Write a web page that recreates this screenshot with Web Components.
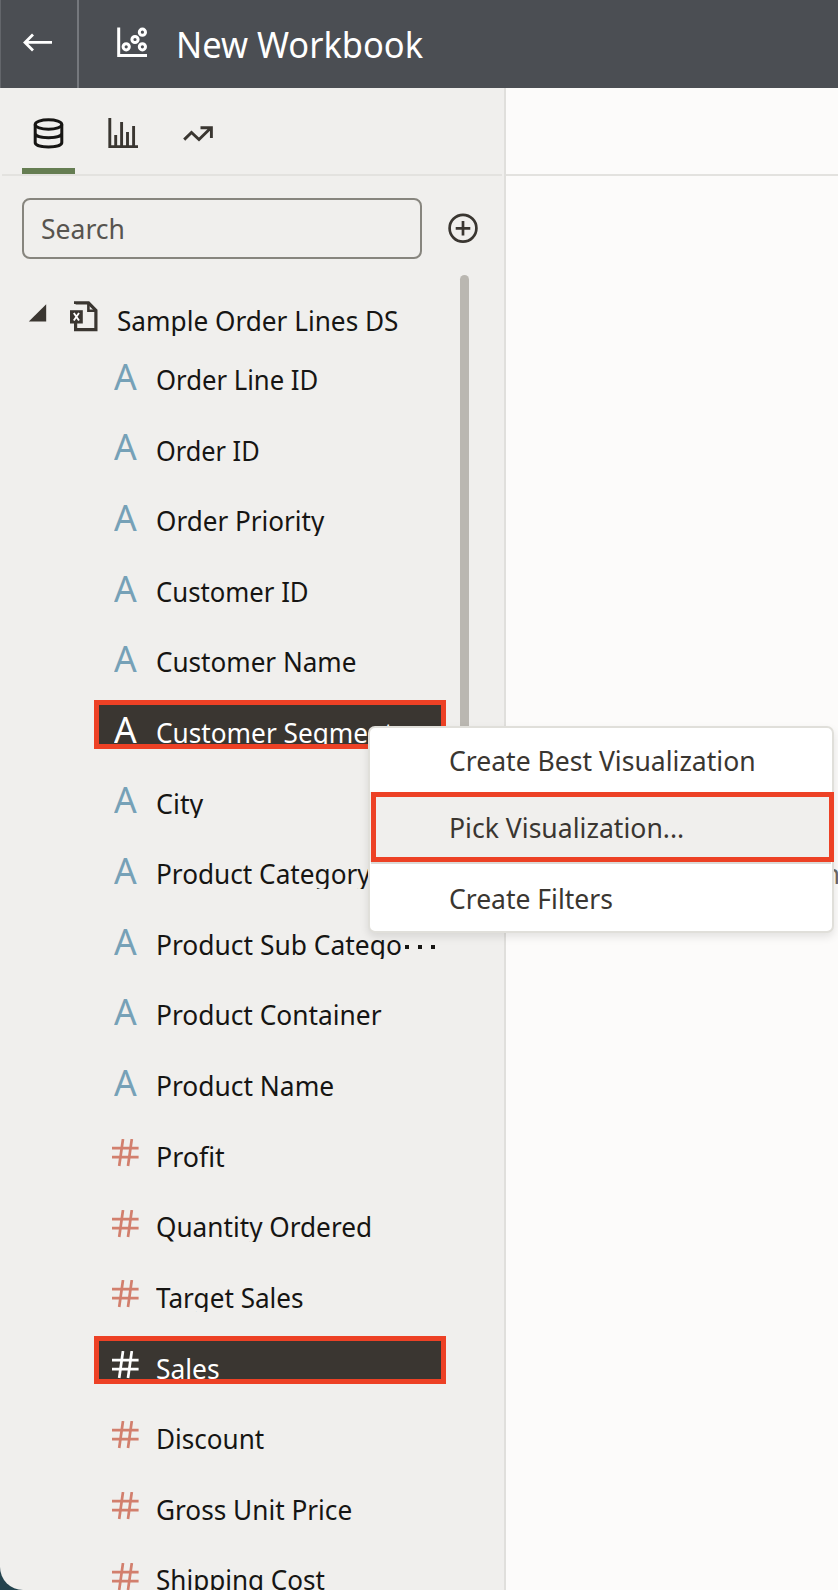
<!DOCTYPE html>
<html lang="en">
<head>
<meta charset="utf-8">
<title>New Workbook</title>
<style>
  html, body { margin: 0; height: 1590px; overflow: hidden; background: #24434e; }
  body { font-family: "Noto Sans", "Open Sans", sans-serif; color: #161513; }
</style>
</head>
<body>
<workbook-app></workbook-app>
<script>
const define = (name, html, setup) => customElements.define(name, class extends HTMLElement {
  connectedCallback() {
    if (this.shadowRoot) return;
    const root = this.attachShadow({ mode: 'open' });
    const t = document.createElement('template');
    t.innerHTML = html;
    root.append(t.content.cloneNode(true));
    if (setup) setup(this, root);
  }
});

/* One line of text, condensed so that its ink spans `ink` pixels. */
const pen = document.createElement('canvas').getContext('2d');
define('fit-text', `
  <style>
    :host { display: block; white-space: nowrap; }
    span { display: inline-block; transform-origin: 0 0; }
  </style>
  <span><slot></slot></span>`, (el, root) => {
  const cs = getComputedStyle(el);
  pen.font = `${cs.fontSize} ${cs.fontFamily}`;
  const m = pen.measureText(el.textContent);
  const ink = m.actualBoundingBoxRight + m.actualBoundingBoxLeft;
  const want = parseFloat(el.getAttribute('ink'));
  if (want) root.querySelector('span').style.transform = `scaleX(${want / ink})`;
});

define('app-header', `
  <style>
    :host { display: flex; height: 88px; background: #4b4e53; color: #fff; box-sizing: border-box; border-left: 1px solid #63666b; }
    .back { width: 76px; border-right: 2px solid #75787d; }
    svg { display: block; }
    .back svg { margin: 30px 0 0 19px; }
    .chart { margin: 24px 0 0 36px; }
    fit-text { font-size: 36px; line-height: 50px; margin: 20px 0 0 25px; }
  </style>
  <div class="back"><svg width="36" height="24" fill="none" stroke="#fff" stroke-width="2.8"><path d="M32 12.4H5M13 4.4L5 12.4L13 20.4"/></svg></div>
  <svg class="chart" width="36" height="36" fill="none" stroke="#fff"><path stroke-width="3" d="M3.7 3.5V31.5H32"/><g stroke-width="3"><circle cx="11.2" cy="22.8" r="3.1"/><circle cx="20" cy="15.5" r="3.1"/><circle cx="27.4" cy="8.2" r="3.1"/><circle cx="27.4" cy="22.8" r="3.1"/></g></svg>
  <fit-text ink="244">New Workbook</fit-text>`);

define('panel-tabs', `
  <style>
    :host { display: flex; height: 86px; margin: 0 2px; border-bottom: 2px solid #e3e2df; }
    .tab { width: 53px; height: 86px; box-sizing: border-box; margin-right: 22px; }
    .tab:first-of-type { margin-left: 20px; border-bottom: 6px solid #657d52; }
    svg { display: block; margin: 28px 0 0 9px; }
  </style>
  <div class="tab"><svg width="36" height="36" fill="none" stroke="#161513" stroke-width="3"><ellipse cx="17.5" cy="8.5" rx="13.3" ry="4.8"/><path d="M4.2 8.5V26.5C4.2 32.4 30.8 32.4 30.8 26.5V8.5M4.2 17.3C4.2 23.2 30.8 23.2 30.8 17.3"/></svg></div>
  <div class="tab"><svg width="36" height="36" fill="none" stroke="#3a3631" stroke-width="2.9"><path d="M3.8 2V30.6H32M9.7 30V19M15.6 30V6M21.5 30V16M27.6 30V10"/></svg></div>
  <div class="tab"><svg width="36" height="36" fill="none" stroke="#3a3631" stroke-width="2.9"><path d="M3.2 23.6L10.5 16.4L18 23.5L30 11.8M19.5 11.7H30.4V22.1"/></svg></div>`);

define('search-row', `
  <style>
    :host { display: flex; padding: 22px 0 0 22px; }
    .box { box-sizing: border-box; width: 400px; height: 61px; border: 2px solid #87857e; border-radius: 8px; padding: 9.4px 0 0 17px; }
    fit-text { font-size: 27px; line-height: 40px; color: #57544f; }
    svg { display: block; margin: 13px 0 0 24px; }
  </style>
  <div class="box"><fit-text ink="81.3">Search</fit-text></div>
  <svg width="34" height="34" fill="none" stroke="#3a3631" stroke-width="2.7"><circle cx="17" cy="17.3" r="13.4"/><path d="M17 10V24.6M9.7 17.3H24.3"/></svg>`);

define('tree-root', `
  <style>
    :host { display: flex; height: 91px; }
    svg { display: block; flex: none; }
    .fold { margin: 44px 0 0 28px; }
    .file { margin: 41px 0 0 21px; }
    .clip { height: 32.5px; overflow: hidden; margin: 44px 0 0 15.8px; }
    fit-text { font-size: 27px; line-height: 36px; }
  </style>
  <svg class="fold" width="20" height="20"><path fill="#3a3631" d="M18.2 1.3V18.6H.8z"/></svg>
  <svg class="file" width="32" height="34" fill="none" stroke="#3a3631"><path stroke-width="3.2" d="M6.6 4V2.9H19.5L26.9 10.5V29.6H6.6V22"/><path stroke-width="2.6" d="M19.4 3V10.7H27"/><path fill="#3a3631" stroke="none" d="M1 10.2H13.8V23.5H1z"/><path stroke="#fff" stroke-width="1.9" d="M4.8 13L10 20.5M10 13L4.8 20.5"/></svg>
  <div class="clip"><fit-text ink="279.7">Sample Order Lines DS</fit-text></div>`);

define('field-row', `
  <style>
    :host { display: flex; position: relative; height: 70.62px; flex: none; box-sizing: border-box; padding-left: 112px; }
    .icon { width: 28px; height: 44px; flex: none; color: #76a1b7; font-size: 36px; line-height: 50px; position: relative; }
    .icon fit-text { margin: 1.7px 0 0 2px; }
    .icon svg { display: block; margin-top: 12.2px; stroke: #d27f6d; }
    .clip { height: 32.5px; width: 297px; overflow: hidden; margin: 12px 0 0 16.4px; position: relative; display: flex; }
    .clip fit-text { font-size: 27px; line-height: 36px; }
    :host([selected]) { color: #fff; }
    :host([selected]) .icon { color: #fff; }
    :host([selected]) .icon svg { stroke: #fff; }
    .fill, .mark { display: none; position: absolute; left: 94px; top: -3px; width: 352.4px; height: 48.6px; box-sizing: border-box; }
    :host([selected]) .fill { display: block; background: #3a3631; }
    :host([selected]) .mark { display: block; border: 5.3px solid #ed4125; }
    .dots { display: none; gap: 9px; position: absolute; left: 249px; top: 18px; }
    .dots i { width: 4px; height: 4px; background: #161513; }
    :host([more]) .dots { display: flex; }
  </style>
  <div class="fill"></div>
  <div class="icon"></div>
  <div class="clip"><slot></slot><div class="dots"><i></i><i></i><i></i></div></div>
  <div class="mark"></div>`, (el, root) => {
  root.querySelector('.icon').innerHTML = el.getAttribute('kind') === 'measure'
    ? '<svg width="28" height="28" fill="none" stroke-width="2.7"><path d="M0 9.2H26.6M0 18.2H26.6M11 0L7.2 27M19.8 0L16 27"/></svg>'
    : '<fit-text ink="22.7">A</fit-text>';
  const label = document.createElement('fit-text');
  label.setAttribute('ink', el.getAttribute('ink'));
  label.textContent = el.getAttribute('label');
  root.querySelector('slot').replaceWith(label);
});

const fields = [
  ['Order Line ID', 160.7], ['Order ID', 102], ['Order Priority', 167.5], ['Customer ID', 151],
  ['Customer Name', 198.3], ['Customer Segment', 237, 'selected'], ['City', 46.5],
  ['Product Category', 213], ['Product Sub Catego', 242.7, 'more'], ['Product Container', 223.5],
  ['Product Name', 175], ['Profit', 67, 'm'], ['Quantity Ordered', 213.5, 'm'],
  ['Target Sales', 146.7, 'm'], ['Sales', 61.7, 'm selected'], ['Discount', 106.5, 'm'],
  ['Gross Unit Price', 194, 'm'], ['Shipping Cost', 168.3, 'm']
];
define('field-tree', `
  <style>
    :host { display: grid; grid-template-columns: 460px 9px; margin-top: 0; }
    .list { display: flex; flex-direction: column; }
    .bar { margin-top: 16px; height: 560px; background: #bab7b1; border-radius: 5px; }
  </style>
  <div class="list"><tree-root></tree-root>${fields.map(([n, w, f = '']) =>
    `<field-row label="${n}" ink="${w}" kind="${f.startsWith('m') && f !== 'more' ? 'measure' : 'attribute'}" ${f.includes('selected') ? 'selected' : ''} ${f === 'more' ? 'more' : ''}></field-row>`).join('')}</div>
  <div class="bar"></div>`);

define('data-panel', `
  <style>
    :host { display: block; box-sizing: border-box; width: 506px; height: 1502px; overflow: hidden; background: #f0efed; border-right: 2px solid #e0dfdc; border-bottom-left-radius: 23px; }
  </style>
  <panel-tabs></panel-tabs><search-row></search-row><field-tree></field-tree>`);

define('design-canvas', `
  <style>
    :host { display: block; flex: 1; background: #fcfbfa; }
    .top { height: 86px; border-bottom: 2px solid #e3e2df; }
  </style>
  <div class="top"></div>`);

define('menu-item', `
  <style>
    :host { display: block; height: 66px; box-sizing: border-box; padding: 14.7px 0 0 78.5px; color: #3a3631; font-size: 27px; line-height: 40px; position: relative; }
    :host([active]) { background: #f0efed; height: 70px; padding-top: 15.4px; }
    :host([active])::after { content: ""; position: absolute; inset: 0 -2px 0 1px; border: 5.3px solid #ed4125; }
  </style>
  <slot></slot>`);

define('context-menu', `
  <style>
    :host { display: block; position: absolute; left: 368px; top: 726px; width: 466px; height: 207px; box-sizing: border-box; background: #fff; border: 2px solid #e0dfda; border-radius: 7px; box-shadow: 0 4px 8px rgba(0,0,0,.1); }
    menu-item:first-of-type { height: 64.3px; padding-top: 12.9px; }
    .rule { height: 2px; margin: 0 1px; background: #dcdad7; }
  </style>
  <menu-item><fit-text ink="304">Create Best Visualization</fit-text></menu-item>
  <menu-item active><fit-text ink="232">Pick Visualization...</fit-text></menu-item>
  <div class="rule"></div>
  <menu-item><fit-text ink="162">Create Filters</fit-text></menu-item>`);

define('workbook-app', `
  <style>
    :host { display: block; position: relative; width: 838px; height: 1590px; overflow: hidden; }
    .main { display: flex; }
    .hint { position: absolute; left: 823.5px; top: 856px; font-size: 27px; line-height: 36px; color: #6b6864; }
  </style>
  <app-header></app-header>
  <div class="main"><data-panel></data-panel><design-canvas></design-canvas></div>
  <div class="hint">n</div>
  <context-menu></context-menu>`);
</script>
</body>
</html>
